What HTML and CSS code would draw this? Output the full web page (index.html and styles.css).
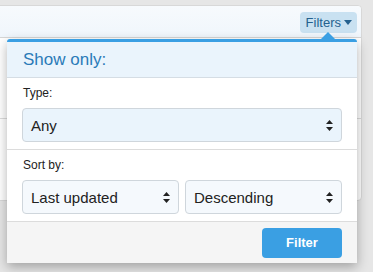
FILE: index.html
```html
<!DOCTYPE html>
<html lang="en">

<head>
    <meta charset="UTF-8">
    <title>Filters</title>
    <link rel="stylesheet" href="styles.css">
</head>

<body>
    <div class="page">
        <div class="card">
            <div class="card-head">
                <button class="filters-btn">Filters <span class="caret"></span></button>
            </div>
            <div class="card-row"></div>
            <div class="card-row last"></div>
        </div>

        <div class="dropdown">
            <div class="arrow"></div>
            <div class="dd-head">Show only:</div>
            <div class="dd-section">
                <div class="dd-label">Type:</div>
                <div class="select full">
                    <span>Any</span>
                    <svg class="updown" width="7" height="11" viewBox="0 0 7 11"><path d="M3.5 0 L7 4 L0 4 Z M0 7 L7 7 L3.5 11 Z" fill="#222"/></svg>
                </div>
            </div>
            <div class="dd-section">
                <div class="dd-label">Sort by:</div>
                <div class="select-row">
                    <div class="select light">
                        <span>Last updated</span>
                        <svg class="updown" width="7" height="11" viewBox="0 0 7 11"><path d="M3.5 0 L7 4 L0 4 Z M0 7 L7 7 L3.5 11 Z" fill="#222"/></svg>
                    </div>
                    <div class="select light">
                        <span>Descending</span>
                        <svg class="updown" width="7" height="11" viewBox="0 0 7 11"><path d="M3.5 0 L7 4 L0 4 Z M0 7 L7 7 L3.5 11 Z" fill="#222"/></svg>
                    </div>
                </div>
            </div>
            <div class="dd-foot">
                <button class="filter-btn">Filter</button>
            </div>
        </div>
    </div>
</body>

</html>
```

FILE: styles.css
```css
* {
    padding: 0px;
    margin: 0px;
    box-sizing: border-box;
}

html,
body {
    width: 100%;
    height: 100%;
    overflow: hidden;
}

body {
    background-color: #e6e6e6;
    font-family: "Liberation Sans", Arial, sans-serif;
    color: #222;
}

.page {
    position: relative;
    padding-top: 5px;
}

.card {
    width: 366px;
    margin-left: -4px;
    background-color: #fff;
    border: 1px solid #d8d8d8;
    border-radius: 4px;
}

.card-head {
    height: 32px;
    background: linear-gradient(#f7fafd, #f0f6fc);
    border-bottom: 1px solid #d6d6d6;
    border-radius: 4px 4px 0 0;

    display: flex;
    justify-content: flex-end;
    align-items: center;
    padding-right: 4px;
}

.filters-btn {
    height: 21px;
    padding: 0 5px 0 6px;
    margin-top: 2px;
    background-color: #c9e1f1;
    color: #24618f;
    border: none;
    border-radius: 4px;
    font-family: "Liberation Sans", Arial, sans-serif;
    font-size: 13px;
    display: flex;
    align-items: center;
}

.caret {
    display: inline-block;
    margin-left: 3px;
    border-left: 4px solid transparent;
    border-right: 4px solid transparent;
    border-top: 5px solid #24618f;
}

.card-row {
    height: 81px;
    border-bottom: 1px solid #dcdcdc;
}

.card-row.last {
    height: 81px;
    border-bottom: none;
}

.dropdown {
    position: absolute;
    top: 39px;
    left: 7px;
    width: 350px;
    background-color: #fff;
    border-top: 3px solid #3a9fe3;
    border-radius: 3px 3px 0 0;
    box-shadow: 0 4px 12px rgba(0, 0, 0, 0.3);
}

.arrow {
    position: absolute;
    top: -10px;
    left: 314px;
    border-left: 7px solid transparent;
    border-right: 7px solid transparent;
    border-bottom: 7px solid #3a9fe3;
}

.dd-head {
    height: 36px;
    padding-left: 16px;
    background-color: #eaf4fc;
    border-bottom: 1px solid #d5dde4;
    color: #2a7bb8;
    font-size: 17px;
    display: flex;
    align-items: center;
}

.dd-section {
    padding: 7px 15px 7px 15px;
    border-bottom: 1px solid #dcdcdc;
}

.dd-label {
    font-size: 12px;
    line-height: 16px;
    margin-bottom: 7px;
    padding-left: 1px;
}

.select {
    height: 34px;
    border: 1px solid #cfd6dc;
    border-radius: 4px;
    font-size: 15px;
    padding: 0 8px 0 8px;

    display: flex;
    align-items: center;
    justify-content: space-between;
}

.select.full {
    background-color: #eaf4fc;
}

.select.light {
    background-color: #f5f9fd;
}

.select-row {
    display: grid;
    grid-template-columns: 1fr 1fr;
    gap: 6px;
}

.dd-foot {
    height: 41px;
    background-color: #f5f5f5;
    padding-right: 15px;

    display: flex;
    justify-content: flex-end;
    align-items: center;
}

.filter-btn {
    width: 80px;
    height: 30px;
    background-color: #3a9fe3;
    color: #fff;
    border: none;
    border-radius: 4px;
    font-family: "Liberation Sans", Arial, sans-serif;
    font-size: 13px;
    font-weight: bold;
}
```
